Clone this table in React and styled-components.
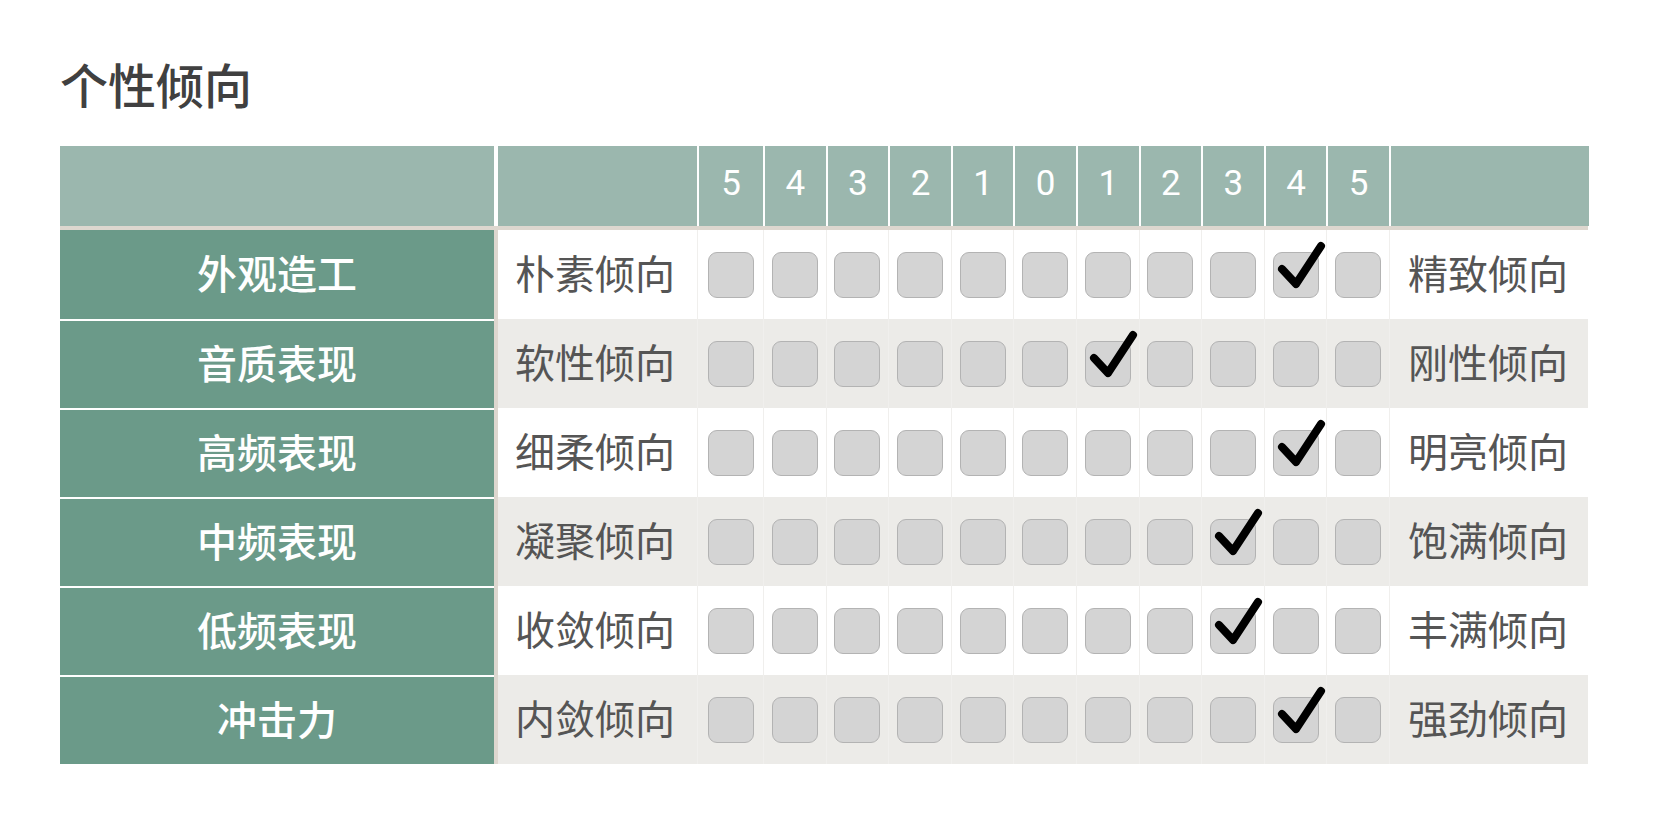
import React from "react";
import styled, { createGlobalStyle } from "styled-components";

const GlobalStyle = createGlobalStyle`
    body {
        margin: 0;
        background: #ffffff;
        font-family: "Noto Sans CJK SC", "Noto Sans", sans-serif;
    }
`;

const COLUMNS = "434px 4px 199px 66px repeat(10, 62.6px) 200px";

const Page = styled.div`
    padding: 59px 0 0 60px;
    width: 1528px;
`;

const Title = styled.h2`
    margin: 0;
    font-size: 48px;
    line-height: 48px;
    font-weight: 500;
    color: #404040;
`;

const Table = styled.div`
    margin-top: 39px;
    width: 1528px;
`;

const HeaderRow = styled.div`
    display: grid;
    grid-template-columns: ${COLUMNS};
    height: 80px;
    border-bottom: 4px solid #ddd7cf;
`;

const HeadCell = styled.div`
    background: #9bb7ae;
    border-left: ${({ $sep }) => ($sep ? "2px solid #ffffff" : "none")};
    display: flex;
    align-items: center;
    justify-content: center;
    padding-bottom: 5px;
    color: #ffffff;
    font-family: Roboto, "Liberation Sans", sans-serif;
    font-size: 35px;
`;

const HeadGap = styled.div`
    background: #ffffff;
`;

const Row = styled.div`
    display: grid;
    grid-template-columns: ${COLUMNS};
    height: 89px;
    background: ${({ $alt }) => ($alt ? "#ecebe8" : "#ffffff")};
`;

const Aspect = styled.div`
    background: #6b9a89;
    border-top: ${({ $first }) => ($first ? "none" : "2px solid #ffffff")};
    display: flex;
    align-items: center;
    justify-content: center;
    padding-bottom: 6px;
    color: #ffffff;
    font-size: 40px;
    font-weight: 500;
`;

const Divider = styled.div`
    background: #ddd7cf;
`;

const Tendency = styled.div`
    display: flex;
    align-items: center;
    padding: 0 0 6px ${({ $right }) => ($right ? "18px" : "17px")};
    border-left: ${({ $right }) => ($right ? "1px solid #f0efed" : "none")};
    color: #555555;
    font-size: 40px;
`;

const BoxCell = styled.div`
    display: flex;
    align-items: center;
    justify-content: center;
    border-left: 1px solid #f0efed;
`;

const Box = styled.div`
    position: relative;
    width: 44px;
    height: 44px;
    border: 1.5px solid #b3b3b3;
    border-radius: 9px;
    background: #d4d4d4;
`;

const Check = styled.svg`
    position: absolute;
    left: 0;
    top: -13px;
    width: 58px;
    height: 58px;
    overflow: visible;
`;

const scale = [5, 4, 3, 2, 1, 0, 1, 2, 3, 4, 5];

const rows = [
    { aspect: "外观造工", left: "朴素倾向", right: "精致倾向", mark: 9 },
    { aspect: "音质表现", left: "软性倾向", right: "刚性倾向", mark: 6 },
    { aspect: "高频表现", left: "细柔倾向", right: "明亮倾向", mark: 9 },
    { aspect: "中频表现", left: "凝聚倾向", right: "饱满倾向", mark: 8 },
    { aspect: "低频表现", left: "收敛倾向", right: "丰满倾向", mark: 8 },
    { aspect: "冲击力", left: "内敛倾向", right: "强劲倾向", mark: 9 },
];

const CheckMark = () => (
    <Check viewBox="0 0 58 58">
        <polyline
            points="8,29 22,44 47,6"
            fill="none"
            stroke="#000000"
            strokeWidth="8"
            strokeLinecap="round"
            strokeLinejoin="round"
        />
    </Check>
);

const App = () => (
    <Page>
        <GlobalStyle />
        <Title>个性倾向</Title>
        <Table>
            <HeaderRow>
                <HeadCell />
                <HeadGap />
                <HeadCell />
                {scale.map((n, i) => (
                    <HeadCell key={i} $sep>{n}</HeadCell>
                ))}
                <HeadCell $sep />
            </HeaderRow>
            {rows.map((row, r) => (
                <Row key={row.aspect} $alt={r % 2 === 1}>
                    <Aspect $first={r === 0}>{row.aspect}</Aspect>
                    <Divider />
                    <Tendency>{row.left}</Tendency>
                    {scale.map((n, i) => (
                        <BoxCell key={i}>
                            <Box>{i === row.mark && <CheckMark />}</Box>
                        </BoxCell>
                    ))}
                    <Tendency $right>{row.right}</Tendency>
                </Row>
            ))}
        </Table>
    </Page>
);

export default App;
